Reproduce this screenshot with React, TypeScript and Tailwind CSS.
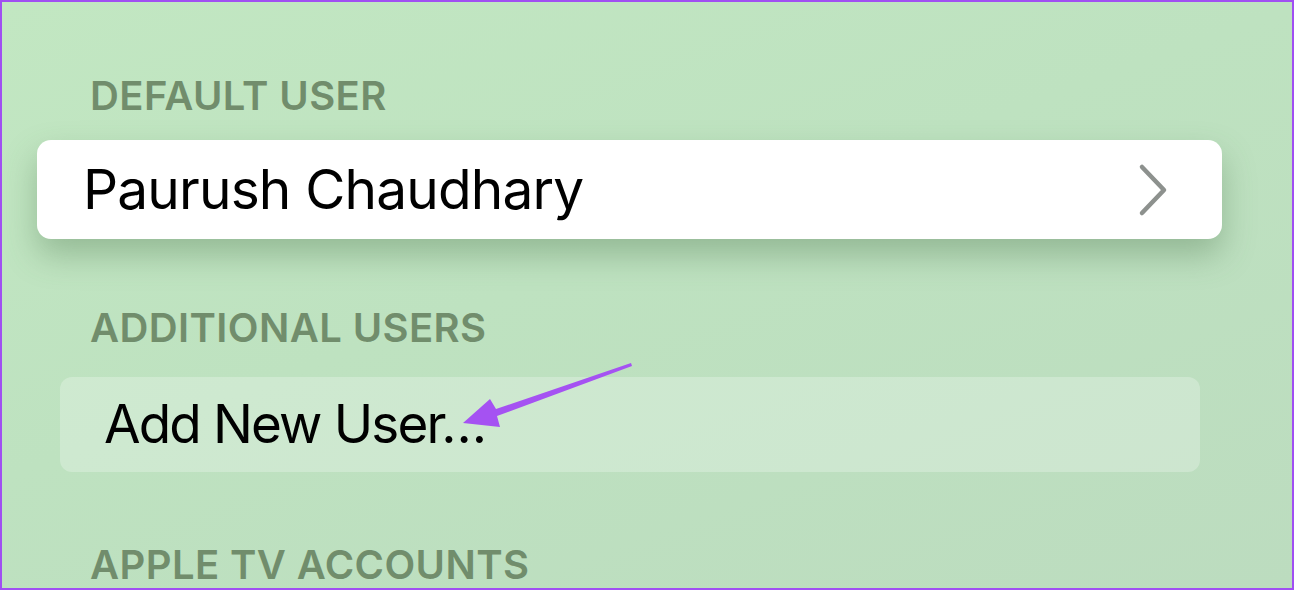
import React from 'react';

const font = { fontFamily: 'Inter, "Noto Sans", sans-serif' };

function SectionLabel({ children }: { children: React.ReactNode }) {
    return (
        <h3 className="pl-[88px] text-[40px] leading-none font-semibold tracking-[0.01em] text-[#718d6c]">{children}</h3>
    );
}

function Chevron() {
    return (
        <svg width="34" height="54" viewBox="0 0 34 54" className="shrink-0">
            <path d="M6 4 L28 27 L6 50" fill="none" stroke="#8d918e" strokeWidth="4.5" strokeLinecap="round" strokeLinejoin="round" />
        </svg>
    );
}

export default function App() {
    return (
        <div
            style={font}
            className="relative w-[1294px] h-[590px] overflow-hidden border-2 border-[#a04ff2] bg-[linear-gradient(160deg,#c2e7c2_0%,#bee2c0_45%,#bcdcbf_100%)]"
        >
            <div className="flex flex-col pt-[74px]">
                <SectionLabel>DEFAULT USER</SectionLabel>

                <div className="mt-[24px] ml-[35px] w-[1185px] h-[99px] rounded-[14px] bg-white shadow-[0_16px_32px_rgba(70,110,70,0.35)] flex items-center justify-between pl-[46px] pr-[52px]">
                    <span className="text-[55px] leading-none text-black tracking-[-0.015em]">Paurush Chaudhary</span>
                    <Chevron />
                </div>

                <div className="mt-[69px]">
                    <SectionLabel>ADDITIONAL USERS</SectionLabel>
                </div>

                <div className="mt-[29px] ml-[58px] w-[1140px] h-[95px] rounded-[12px] bg-white/25 flex items-center pl-[44px]">
                    <span className="text-[53px] leading-none text-black tracking-[-0.035em]">Add New User…</span>
                </div>

                <div className="mt-[73px]">
                    <SectionLabel>APPLE TV ACCOUNTS</SectionLabel>
                </div>
            </div>

            {/* pointer arrow */}
            <svg className="absolute -left-[2px] -top-[2px] pointer-events-none" width="1294" height="590" viewBox="0 0 1294 590">
                <polygon
                    points="631,363 496,409 490,399 463,423 500,427 497,416 632,366"
                    fill="#a552f2"
                />
            </svg>
        </div>
    );
}
